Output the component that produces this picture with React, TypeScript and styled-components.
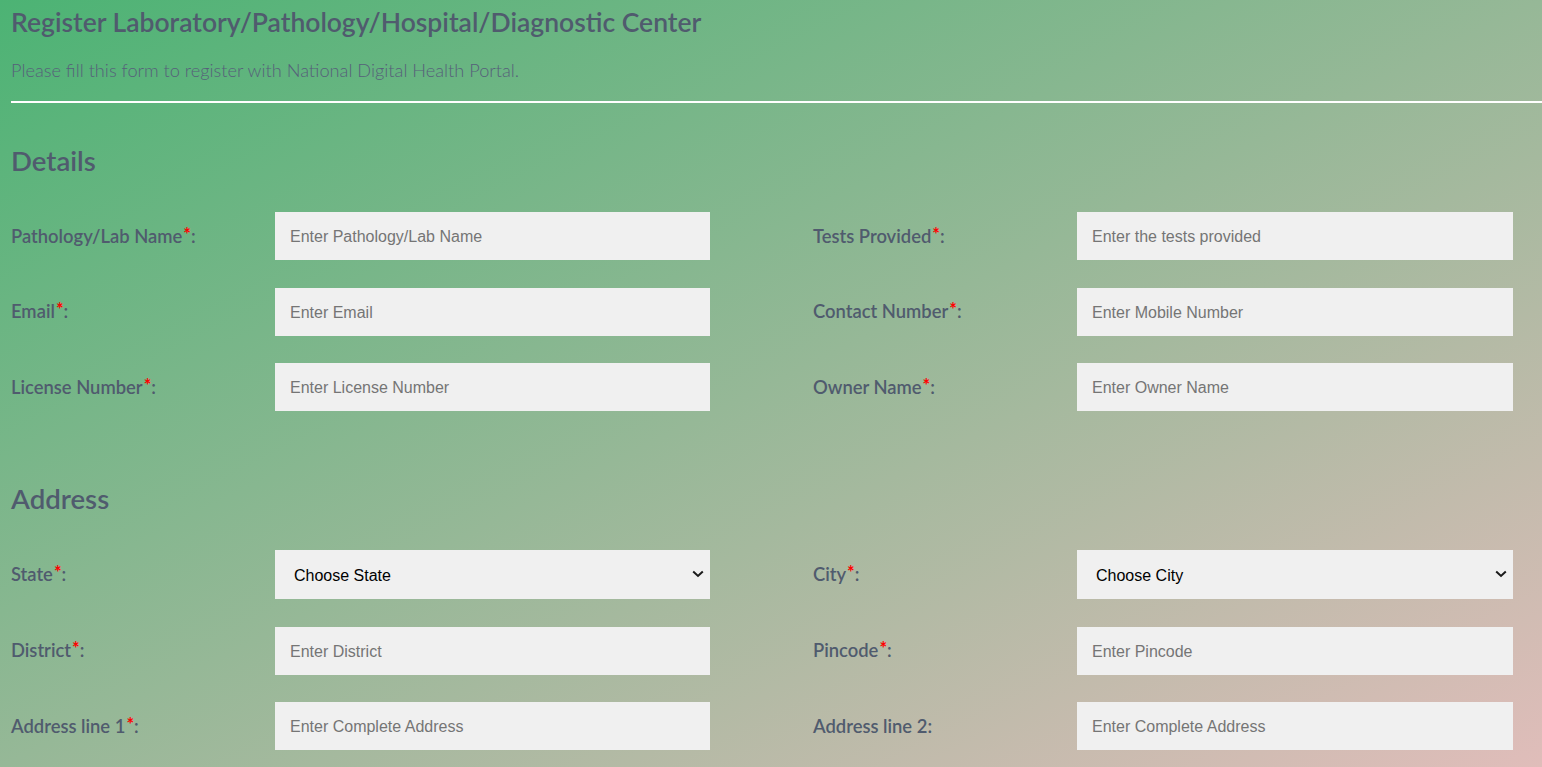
import React from "react";
import styled, { createGlobalStyle } from "styled-components";

const GlobalStyle = createGlobalStyle`
  html, body { margin: 0; padding: 0; }
  body {
    min-height: 100vh;
    background: linear-gradient(to bottom right, #4cb374, #e0bdba);
    background-attachment: fixed;
    font-family: Lato, "Open Sans", sans-serif;
    color: #505b6e;
    overflow: hidden;
  }
`;

const Page = styled.div`
  padding: 0 0 0 11px;
`;

const Title = styled.h1`
  margin: 0;
  padding-top: 5px;
  font-size: 26.5px;
  font-weight: 600;
  line-height: 34px;
  color: #505b6e;
`;

const Subtitle = styled.p`
  margin: 0;
  padding-top: 21px;
  font-size: 18.2px;
  font-weight: 300;
  line-height: 20px;
  color: #56607a;
`;

const Rule = styled.hr`
  margin: 21px 0 0 0;
  border: none;
  height: 2px;
  background: #ffffff;
`;

const SectionTitle = styled.h2<{ $top: number }>`
  margin: 0;
  padding-top: ${(p) => p.$top}px;
  font-size: 27.6px;
  font-weight: 600;
  line-height: 36px;
  color: #505b6e;
`;

const FieldGrid = styled.div<{ $top: number }>`
  display: grid;
  grid-template-columns: 699px 700px;
  column-gap: 103px;
  row-gap: 27.5px;
  margin-top: ${(p) => p.$top}px;
`;

const Field = styled.div`
  display: grid;
  grid-template-columns: 264px 1fr;
  align-items: center;
`;

const Label = styled.label`
  font-size: 18.4px;
  font-weight: 600;
  line-height: 22px;
  color: #505b6e;
  margin-top: -1px;
`;

const Star = styled.span`
  color: #ff0000;
  font-size: 18px;
  font-weight: 700;
  line-height: 0;
  vertical-align: 2px;
  margin-left: 1px;
`;

const Input = styled.input`
  box-sizing: border-box;
  width: 100%;
  height: 48px;
  border: none;
  outline: none;
  background: #f0f0f0;
  padding: 2px 15px 0;
  font-family: "Liberation Sans", Arial, sans-serif;
  font-size: 16px;
  color: #222;
  &::placeholder { color: #757575; }
`;

const SelectWrap = styled.div`
  position: relative;
  height: 49px;
`;

const Select = styled.select`
  box-sizing: border-box;
  width: 100%;
  height: 49px;
  border: none;
  outline: none;
  background: #f0f0f0;
  appearance: none;
  -webkit-appearance: none;
  padding: 2px 15px 0 19px;
  font-family: "Liberation Sans", Arial, sans-serif;
  font-size: 16px;
  color: #000;
`;

const Chevron = styled.svg`
  position: absolute;
  right: 6px;
  top: 20px;
  width: 12px;
  height: 8px;
  pointer-events: none;
`;

type F = { label: string; req: boolean; ph?: string; select?: boolean };

const details: F[] = [
  { label: "Pathology/Lab Name", req: true, ph: "Enter Pathology/Lab Name" },
  { label: "Tests Provided", req: true, ph: "Enter the tests provided" },
  { label: "Email", req: true, ph: "Enter Email" },
  { label: "Contact Number", req: true, ph: "Enter Mobile Number" },
  { label: "License Number", req: true, ph: "Enter License Number" },
  { label: "Owner Name", req: true, ph: "Enter Owner Name" },
];

const address: F[] = [
  { label: "State", req: true, ph: "Choose State", select: true },
  { label: "City", req: true, ph: "Choose City", select: true },
  { label: "District", req: true, ph: "Enter District" },
  { label: "Pincode", req: true, ph: "Enter Pincode" },
  { label: "Address line 1", req: true, ph: "Enter Complete Address" },
  { label: "Address line 2", req: false, ph: "Enter Complete Address" },
];

const FieldRow = ({ f }: { f: F }) => (
  <Field>
    <Label>
      {f.label}
      {f.req && <Star>*</Star>}:
    </Label>
    {f.select ? (
      <SelectWrap>
        <Select defaultValue="">
          <option value="">{f.ph}</option>
        </Select>
        <Chevron viewBox="0 0 12 8">
          <path d="M1.2 1.5 L6 6 L10.8 1.5" fill="none" stroke="#1a1a1a" strokeWidth="2" />
        </Chevron>
      </SelectWrap>
    ) : (
      <Input placeholder={f.ph} />
    )}
  </Field>
);

export default function App() {
  return (
    <>
      <GlobalStyle />
      <Page>
        <Title>Register Laboratory/Pathology/Hospital/Diagnostic Center</Title>
        <Subtitle>Please fill this form to register with National Digital Health Portal.</Subtitle>
        <Rule />
        <SectionTitle $top={40}>Details</SectionTitle>
        <FieldGrid $top={33}>
          {details.map((f) => (
            <FieldRow key={f.label} f={f} />
          ))}
        </FieldGrid>
        <SectionTitle $top={70}>Address</SectionTitle>
        <FieldGrid $top={33}>
          {address.map((f) => (
            <FieldRow key={f.label} f={f} />
          ))}
        </FieldGrid>
      </Page>
    </>
  );
}
